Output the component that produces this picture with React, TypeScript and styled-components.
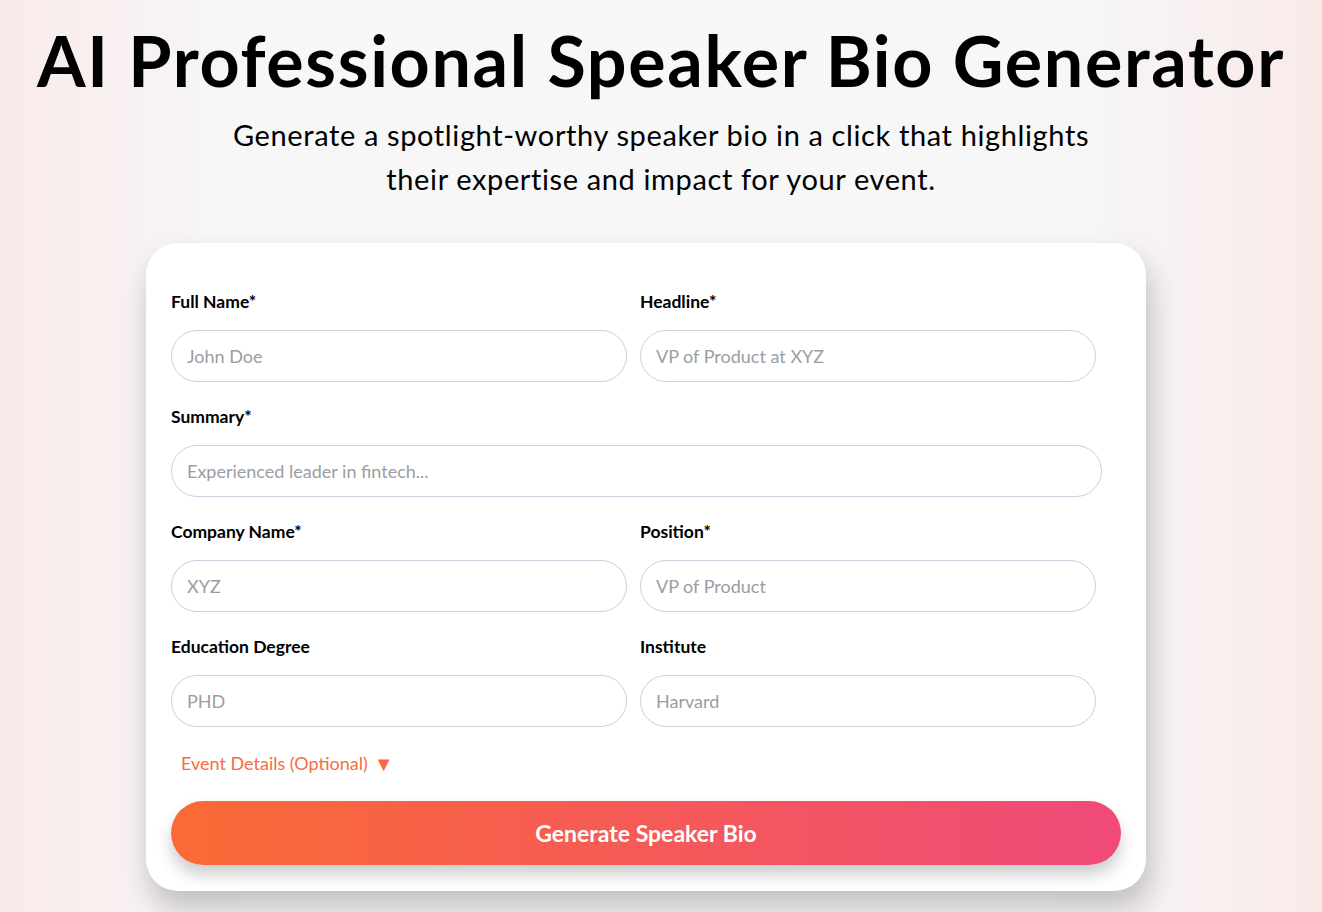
import React from "react";
import styled, { createGlobalStyle } from "styled-components";

const GlobalStyle = createGlobalStyle`
  body {
    margin: 0;
    font-family: "Lato", "Open Sans", sans-serif;
    color: #000;
  }
  * {
    box-sizing: border-box;
  }
`;

const Page = styled.div`
  min-height: 912px;
  background: linear-gradient(
    90deg,
    #f9eaea 0%,
    #f7f7f7 18%,
    #f7f7f7 80%,
    #f9eaea 100%
  );
  display: flex;
  flex-direction: column;
  align-items: center;
  padding-top: 18px;
`;

const Title = styled.h1`
  margin: 0;
  font-size: 70px;
  font-weight: 700;
  line-height: 84px;
  letter-spacing: 1.65px;
  text-align: center;
`;

const Subtitle = styled.p`
  margin: 11px 0 0;
  font-size: 29px;
  font-weight: 400;
  line-height: 44px;
  letter-spacing: 0.62px;
  text-align: center;
  max-width: 900px;
`;

const Card = styled.form`
  margin: 42px 30px 0 0;
  width: 1000px;
  background: #fff;
  border-radius: 32px;
  padding: 49px 25px 26px;
  box-shadow: 4px 18px 30px rgba(0, 0, 0, 0.22);
`;

const Row = styled.div`
  display: flex;
  gap: 13px;
  margin-bottom: 25px;
`;

const Field = styled.label<{ $width: number }>`
  display: flex;
  flex-direction: column;
  width: ${(p) => p.$width}px;
`;

const LabelText = styled.span`
  font-size: 17.5px;
  font-weight: 700;
  line-height: 20px;
  margin-bottom: 18px;
`;

const Input = styled.input`
  height: 52px;
  width: 100%;
  border: 1px solid #c6d2de;
  border-radius: 26px;
  padding: 0 15px;
  font-family: inherit;
  font-size: 18px;
  color: #333;
  background: #fff;
  outline: none;

  &::placeholder {
    color: #9a9ea3;
  }
`;

const Toggle = styled.button`
  display: flex;
  align-items: center;
  gap: 6px;
  margin: 7px 0 0 10px;
  padding: 0;
  border: none;
  background: none;
  font-family: inherit;
  font-size: 18px;
  font-weight: 400;
  color: #f96b3e;
  cursor: pointer;
`;

const Arrow = styled.span`
  font-size: 20px;
  line-height: 1;
  color: #f96b3e;
`;

const Submit = styled.button`
  margin-top: 27px;
  width: 100%;
  height: 64px;
  border: none;
  border-radius: 32px;
  background: linear-gradient(90deg, #fb6a35 0%, #f04a7a 100%);
  color: #fff;
  font-family: inherit;
  font-size: 23px;
  font-weight: 700;
  box-shadow: 0 10px 16px rgba(0, 0, 0, 0.2);
  cursor: pointer;
`;

type FieldDef = { label: string; placeholder: string; width: number };

const rows: FieldDef[][] = [
  [
    { label: "Full Name*", placeholder: "John Doe", width: 456 },
    { label: "Headline*", placeholder: "VP of Product at XYZ", width: 456 },
  ],
  [{ label: "Summary*", placeholder: "Experienced leader in fintech...", width: 931 }],
  [
    { label: "Company Name*", placeholder: "XYZ", width: 456 },
    { label: "Position*", placeholder: "VP of Product", width: 456 },
  ],
  [
    { label: "Education Degree", placeholder: "PHD", width: 456 },
    { label: "Institute", placeholder: "Harvard", width: 456 },
  ],
];

function App() {
  return (
    <Page>
      <GlobalStyle />
      <Title>AI Professional Speaker Bio Generator</Title>
      <Subtitle>
        Generate a spotlight-worthy speaker bio in a click that highlights
        <br />
        their expertise and impact for your event.
      </Subtitle>
      <Card onSubmit={(e) => e.preventDefault()}>
        {rows.map((row, i) => (
          <Row key={i}>
            {row.map((f) => (
              <Field key={f.label} $width={f.width}>
                <LabelText>{f.label}</LabelText>
                <Input placeholder={f.placeholder} />
              </Field>
            ))}
          </Row>
        ))}
        <Toggle type="button">
          Event Details (Optional) <Arrow>▼</Arrow>
        </Toggle>
        <Submit type="submit">Generate Speaker Bio</Submit>
      </Card>
    </Page>
  );
}

export default App;
